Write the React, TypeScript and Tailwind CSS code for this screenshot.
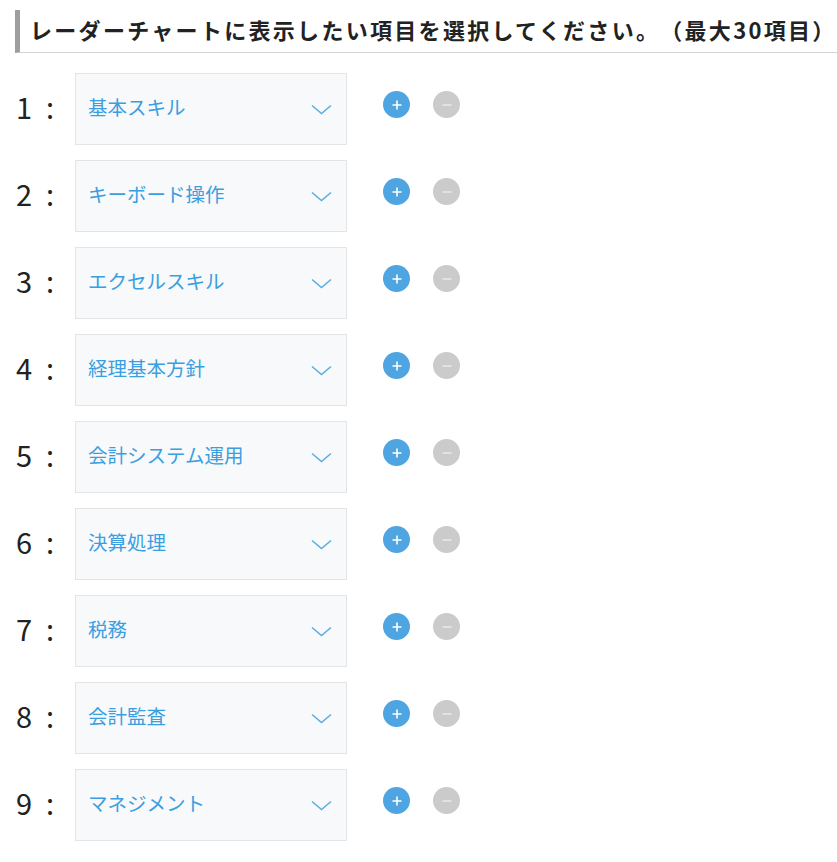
const items = [
  '基本スキル',
  'キーボード操作',
  'エクセルスキル',
  '経理基本方針',
  '会計システム運用',
  '決算処理',
  '税務',
  '会計監査',
  'マネジメント',
]

const jp = { fontFamily: '"Noto Sans CJK JP", "Noto Sans", sans-serif' }

function Row({ n, label }: { n: number; label: string }) {
  return (
    <div className="flex items-center h-[72px]">
      <div className="w-[75px] shrink-0 pl-[16px] text-[29px] leading-none text-[#222] -mt-[6px]" style={jp}>
        {n}<span className="ml-[14px]">:</span>
      </div>
      <div className="w-[272px] h-[72px] shrink-0 bg-[#f7f9fb] border border-[#e2e4e6] flex items-center justify-between pl-[12px] pr-[14px]">
        <span className="text-[19.5px] text-[#3a9ee0] -mt-[4px]" style={jp}>{label}</span>
        <svg width="21" height="11" viewBox="0 0 21 11" className="mt-[1px]">
          <path d="M1 1.5l9.5 8 9.5-8" fill="none" stroke="#5aacdf" strokeWidth="1.5" />
        </svg>
      </div>
      <div className="flex items-center gap-[23px] ml-[36px] -mt-[9px]">
        <button className="w-[27px] h-[27px] rounded-full bg-[#4ea5e2] flex items-center justify-center">
          <svg width="12" height="12" viewBox="0 0 12 12"><path d="M6 1.5v9M1.5 6h9" stroke="#fff" strokeWidth="1.6" /></svg>
        </button>
        <button className="w-[27px] h-[27px] rounded-full bg-[#cbcbcb] flex items-center justify-center">
          <svg width="12" height="12" viewBox="0 0 12 12"><path d="M1.5 6h9" stroke="#e8e8e8" strokeWidth="1.6" /></svg>
        </button>
      </div>
    </div>
  )
}

export default function App() {
  return (
    <div className="w-[837px] min-h-[862px] bg-white pt-[10px]">
      <div className="ml-[15px] border-l-[5px] border-[#9e9e9e] border-b border-b-[#d4d4d4] h-[43px] flex items-center pl-[10px]">
        <h2 className="text-[22px] font-bold text-[#222] tracking-[2.3px] whitespace-nowrap [text-spacing-trim:space-all] -mt-[3px]" style={jp}>
          レーダーチャートに表示したい項目を選択してください。（最大30項目）
        </h2>
      </div>
      <div className="flex flex-col gap-[15px] mt-[20px]">
        {items.map((label, i) => (
          <Row key={i} n={i + 1} label={label} />
        ))}
      </div>
    </div>
  )
}
